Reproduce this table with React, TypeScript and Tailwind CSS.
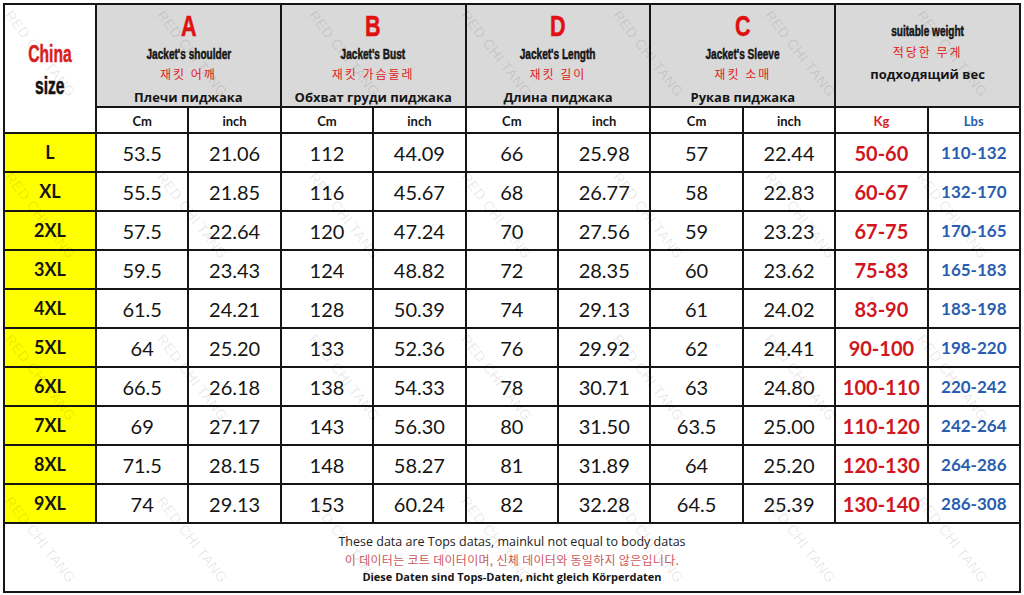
const rows: string[][] = [
  ['L', '53.5', '21.06', '112', '44.09', '66', '25.98', '57', '22.44', '50-60', '110-132'],
  ['XL', '55.5', '21.85', '116', '45.67', '68', '26.77', '58', '22.83', '60-67', '132-170'],
  ['2XL', '57.5', '22.64', '120', '47.24', '70', '27.56', '59', '23.23', '67-75', '170-165'],
  ['3XL', '59.5', '23.43', '124', '48.82', '72', '28.35', '60', '23.62', '75-83', '165-183'],
  ['4XL', '61.5', '24.21', '128', '50.39', '74', '29.13', '61', '24.02', '83-90', '183-198'],
  ['5XL', '64', '25.20', '133', '52.36', '76', '29.92', '62', '24.41', '90-100', '198-220'],
  ['6XL', '66.5', '26.18', '138', '54.33', '78', '30.71', '63', '24.80', '100-110', '220-242'],
  ['7XL', '69', '27.17', '143', '56.30', '80', '31.50', '63.5', '25.00', '110-120', '242-264'],
  ['8XL', '71.5', '28.15', '148', '58.27', '81', '31.89', '64', '25.20', '120-130', '264-286'],
  ['9XL', '74', '29.13', '153', '60.24', '82', '32.28', '64.5', '25.39', '130-140', '286-308'],
];

const groups = [
  { letter: 'A', en: "Jacket's shoulder", ko: '재킷 어깨', ru: 'Плечи пиджака' },
  { letter: 'B', en: "Jacket's Bust", ko: '재킷 가슴둘레', ru: 'Обхват груди пиджака' },
  { letter: 'D', en: "Jacket's Length", ko: '재킷 길이', ru: 'Длина пиджака' },
  { letter: 'C', en: "Jacket's Sleeve", ko: '재킷 소매', ru: 'Рукав пиджака' },
];

// condensed look: Arial-width bold squeezed horizontally, stroked a bit heavier
const narrow = "inline-block font-['Liberation_Sans',sans-serif] font-bold [-webkit-text-stroke:0.5px_currentColor]";
const body = "font-['Lato','Open_Sans',sans-serif]";
const kr = "font-['Noto_Sans_CJK_KR',sans-serif]";

const marks: { x: number; y: number }[] = [];
for (let j = 0; j < 4; j++) {
  for (let k = 0; k < 7; k++) {
    marks.push({ x: 16 + 152 * k, y: 6 + 162 * j });
  }
}

export default function App() {
  return (
    <div className="relative w-[1024px] h-[595px] bg-white overflow-hidden">
      <div className="m-[3px] w-[1018px] h-[590px] bg-[#151515] p-[2px] grid grid-cols-[90px_repeat(10,1fr)] grid-rows-[101px_24px_repeat(10,37px)_1fr] gap-[2px]">
        {/* China size */}
        <div className="row-span-2 bg-white flex flex-col items-center justify-center pt-[2px]">
          <span className={`${narrow} scale-x-[0.68] text-[23px] leading-[32px] text-[#d81e1e]`}>China</span>
          <span className={`${narrow} scale-x-[0.68] text-[23px] leading-[32px] text-[#111]`}>size</span>
        </div>

        {groups.map((g) => (
          <div key={g.letter} className="col-span-2 bg-[#d9d9d9] flex flex-col items-center pt-[5px]">
            <span className={`${narrow} scale-x-[0.72] text-[30px] leading-[32px] text-[#e01010]`}>{g.letter}</span>
            <span className={`${narrow} scale-x-[0.72] text-[14px] leading-[18px] mt-[3px] text-[#151515]`}>{g.en}</span>
            <span className={`${kr} text-[12px] leading-[18px] mt-[2px] tracking-[2px] text-[#e02020]`}>{g.ko}</span>
            <span className="font-['Open_Sans',sans-serif] font-bold text-[13px] leading-[18px] mt-[5px] text-[#151515]">{g.ru}</span>
          </div>
        ))}

        <div className="col-span-2 bg-[#d9d9d9] flex flex-col items-center justify-center pb-[6px]">
          <span className={`${narrow} scale-x-[0.72] text-[14px] leading-[18px] text-[#151515]`}>suitable weight</span>
          <span className={`${kr} text-[12px] leading-[18px] mt-[3px] tracking-[2px] text-[#e02020]`}>적당한 무게</span>
          <span className="font-['Open_Sans',sans-serif] font-bold text-[13px] leading-[18px] mt-[4px] text-[#151515]">подходящий вес</span>
        </div>

        {[0, 1, 2, 3].map((i) => (
          <div key={`u${i}`} className="contents">
            <div className={`bg-white flex items-center justify-center pt-[3px] ${body} font-bold text-[13px] text-[#151515]`}>Cm</div>
            <div className={`bg-white flex items-center justify-center pt-[3px] ${body} font-bold text-[13px] text-[#151515]`}>inch</div>
          </div>
        ))}
        <div className={`bg-white flex items-center justify-center pt-[3px] ${body} font-bold text-[13px] text-[#d81e1e]`}>Kg</div>
        <div className={`bg-white flex items-center justify-center pt-[3px] ${body} font-bold text-[13px] text-[#2a5db0]`}>Lbs</div>

        {rows.map((r) => (
          <div key={r[0]} className="contents">
            <div className={`bg-[#ffff00] flex items-center justify-center ${body} font-bold text-[18px] text-[#151515]`}>{r[0]}</div>
            {r.slice(1, 9).map((v, i) => (
              <div key={i} className={`bg-white flex items-center justify-center ${body} text-[20px] text-[#151515]`}>{v}</div>
            ))}
            <div className={`bg-white flex items-center justify-center ${body} font-bold text-[20px] text-[#d0161e]`}>{r[9]}</div>
            <div className={`bg-white flex items-center justify-center ${body} font-bold text-[17px] text-[#2a5db0]`}>{r[10]}</div>
          </div>
        ))}

        <div className="col-span-11 bg-white flex flex-col items-center pt-[9px]">
          <span className="font-['Open_Sans',sans-serif] text-[12.5px] leading-[18px] text-[#222]">
            These data are Tops datas, mainkul not equal to body datas
          </span>
          <span className={`${kr} text-[12px] leading-[17px] tracking-[0.3px] text-[#cc5a5e]`}>
            이 데이터는 코트 데이터이며, 신체 데이터와 동일하지 않은입니다.
          </span>
          <span className="font-['Open_Sans',sans-serif] font-bold text-[11px] leading-[18px] text-[#151515]">
            Diese Daten sind Tops-Daten, nicht gleich Körperdaten
          </span>
        </div>
      </div>

      {/* watermark */}
      {marks.map((m, i) => (
        <span
          key={i}
          className="absolute pointer-events-none whitespace-nowrap origin-top-left rotate-[52deg] font-['Liberation_Sans',sans-serif] text-[14px] tracking-[0.5px] text-black/10"
          style={{ left: m.x, top: m.y }}
        >
          RED CHI TANG
        </span>
      ))}
    </div>
  );
}
